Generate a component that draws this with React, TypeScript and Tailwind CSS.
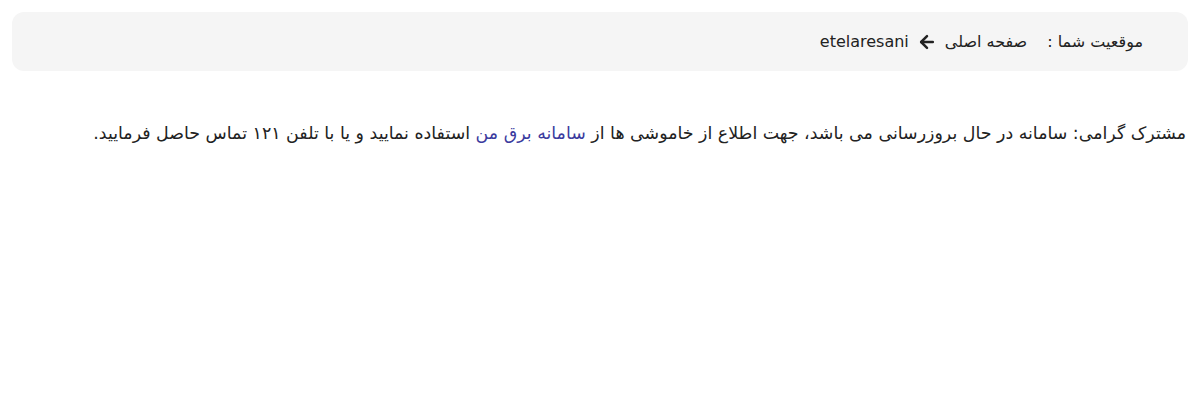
import { ArrowLeft } from 'lucide-react';

export default function App() {
  return (
    <div dir="rtl" className="min-h-[402px] bg-white p-3 text-[#222]" style={{ fontFamily: '"DejaVu Sans", "Noto Sans", sans-serif' }}>
      <nav className="flex h-[59px] items-center gap-5 rounded-xl bg-[#f5f5f5] pr-[45px] text-[16px]">
        <span>موقعیت شما :</span>
        <span className="flex items-center gap-2">
          <span>صفحه اصلی</span>
          <ArrowLeft className="h-5 w-5" strokeWidth={3} />
          <span dir="ltr">etelaresani</span>
        </span>
      </nav>
      <p className="mt-[47px] pr-[2px] text-[17.4px] leading-[30px]">
        مشترک گرامی: سامانه در حال بروزرسانی می باشد، جهت اطلاع از خاموشی ها از{' '}
        <a href="#" className="text-[#3b3b9e]">سامانه برق من</a> استفاده نمایید و یا با تلفن ۱۲۱ تماس حاصل فرمایید.
      </p>
    </div>
  );
}
